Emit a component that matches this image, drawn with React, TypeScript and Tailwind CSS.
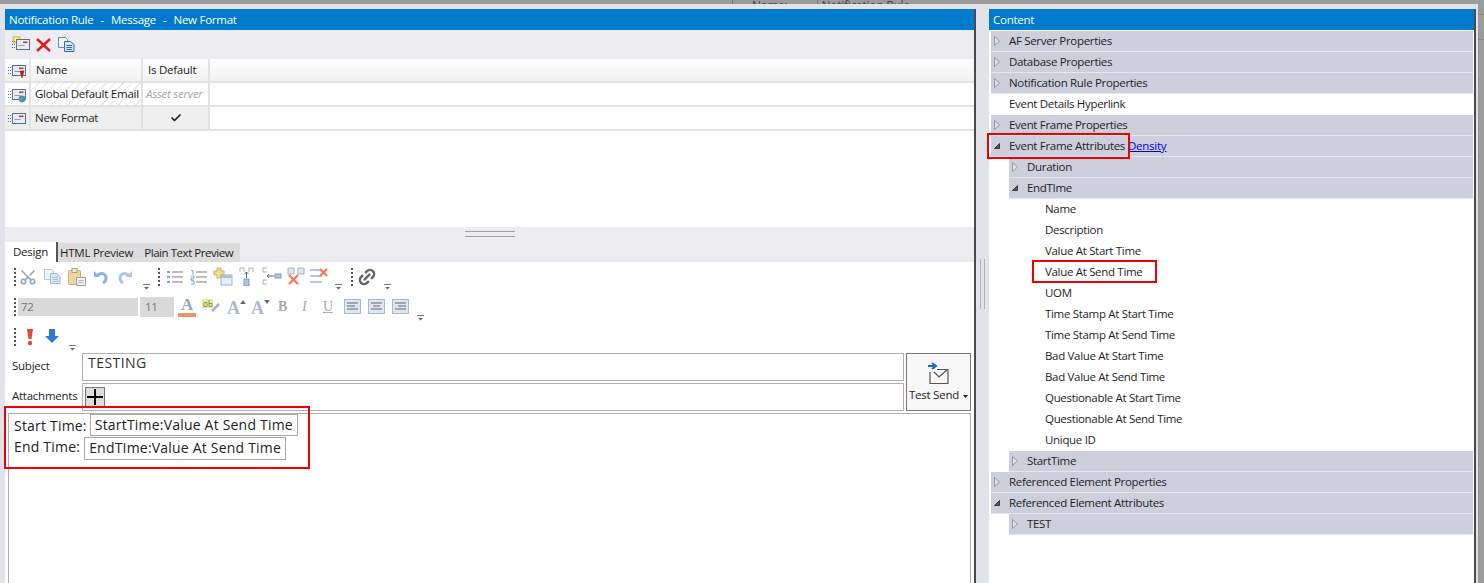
import React from "react";
import { Check, Scissors, Link2 } from "lucide-react";

const FONT = "font-['Open_Sans','Liberation_Sans',sans-serif]";

// little email icon used in the grid and the toolbar
const MailIcon = ({ badge }: { badge?: "pin" | "globe" | "star" }) => (
  <svg width="18" height="17" viewBox="0 0 18 17" className="block">
    {badge === "star" ? (
      <g>
        <rect x="1" y="0" width="7" height="7" fill="#e9d96a" stroke="#c9b64a" strokeWidth="0.6" />
        <rect x="3" y="2" width="3" height="3" fill="#fff6b0" />
      </g>
    ) : null}
    <path d="M0 5.500h3M0 8.500h3M0 11.500h3" stroke="#4f6f96" strokeWidth="1" strokeDasharray="1 1" />
    <rect x="4.500" y="3.500" width="13" height="10" fill="#e6eef8" stroke="#5f6f86" />
    <rect x="11" y="5.500" width="4.500" height="1.600" fill="#c8402e" />
    <path d="M6.500 9.500h6" stroke="#8b9bb0" strokeWidth="1" />
    {badge === "pin" ? <path d="M12 9h4l-2 7z" fill="#d8101c" stroke="#8a0a12" strokeWidth="0.5" /> : null}
    {badge === "globe" ? (
      <g>
        <circle cx="14" cy="13" r="3.400" fill="#4e93c8" />
        <path d="M12 12.500l2-1.500 1 1.500-1.500 2.500z" fill="#6cab4e" />
      </g>
    ) : null}
  </svg>
);

const DocsIcon = ({ pale }: { pale?: boolean }) => (
  <svg width="17" height="15" viewBox="0 0 17 15" className="block shrink-0">
    <path d="M.5.500h7l2 2v8h-9z" fill={pale ? "#eef3f9" : "#f4f8fd"} stroke={pale ? "#b4c8e0" : "#5b8ac4"} />
    <path d="M6.500 4.500h6l3.500 3v7H6.500z" fill={pale ? "#dbe6f3" : "#d5e4f6"} stroke={pale ? "#9db8d8" : "#2f6fb8"} />
    <path d="M8.500 8.500h5.500M8.500 10.500h5.500M8.500 12.500h5.500" stroke={pale ? "#a9c2de" : "#2f6fb8"} />
  </svg>
);

const Grip = () => (
  <div className="w-[2px] h-[18px] shrink-0 bg-[repeating-linear-gradient(180deg,#555_0,#555_2px,transparent_2px,transparent_4px)]" />
);

const Drop = ({ className }: { className: string }) => (
  <svg width="7" height="6" viewBox="0 0 7 6" className={`shrink-0 self-end ${className}`}>
    <path d="M0 .5h7" stroke="#777" />
    <path d="M1 3h5L3.500 5.500z" fill="#666" />
  </svg>
);

const ListIcon = ({ numbered }: { numbered?: boolean }) => (
  <svg width="17" height="16" viewBox="0 0 17 16">
    {numbered ? (
      <path d="M1 1.500h2v4M1 7h3v2H1v2h3M1 12h3v3H1" fill="none" stroke="#7fa6d6" strokeWidth="1" />
    ) : (
      <path d="M1 3h3M1 8h3M1 13h3" stroke="#8fa7c8" strokeWidth="2" />
    )}
    <path d="M6 3h11M6 8h11M6 13h11" stroke="#a8a8a8" strokeWidth="1.300" />
  </svg>
);

const TableTool = ({ kind }: { kind: number }) => (
  <svg width="20" height="19" viewBox="0 0 20 19">
    {kind === 0 ? (
      <g>
        <path d="M4 1h4v3h3v4H8v3H4V8H1V4h3z" fill="#f2dc92" stroke="#d0b060" />
        <rect x="8" y="8" width="11" height="10" fill="#e6eef6" stroke="#9db4cc" />
        <rect x="8" y="8" width="11" height="3" fill="#a9c2dc" />
      </g>
    ) : null}
    {kind === 1 ? (
      <g>
        <path d="M2 5V1h4v4M11 5V1h4v4" fill="none" stroke="#b0b0b0" />
        <rect x="6" y="12" width="5" height="7" fill="#a9c6e6" stroke="#7f9fc4" />
        <path d="M8.500 11V5M6.500 7l2-2 2 2" fill="none" stroke="#666" />
      </g>
    ) : null}
    {kind === 2 ? (
      <g>
        <path d="M5 1H1v4h4M5 13H1v4h4" fill="none" stroke="#b0b0b0" />
        <rect x="13" y="7" width="6" height="4" fill="#a9c6e6" stroke="#7f9fc4" />
        <path d="M12 9H5M7 7L5 9l2 2" fill="none" stroke="#666" />
      </g>
    ) : null}
    {kind === 3 ? (
      <g>
        <path d="M2 1h6v6H2zM12 1h6v6h-6z" fill="#dfe6ee" stroke="#a8b4c2" />
        <path d="M3 8l9 9M12 8l-9 9" stroke="#f07a5c" strokeWidth="2.400" />
      </g>
    ) : null}
    {kind === 4 ? (
      <g>
        <path d="M1 3h12M1 9h12M1 15h12" stroke="#9db6d4" strokeWidth="1.500" />
        <path d="M11 2l7 7M18 2l-7 7" stroke="#f07a5c" strokeWidth="2.200" />
      </g>
    ) : null}
  </svg>
);

const AlignIcon = ({ lines }: { lines: string }) => (
  <svg width="17" height="15" viewBox="0 0 17 15">
    <rect x=".5" y=".5" width="16" height="14" fill="#dfe6f0" stroke="#a9b8cc" />
    <path d={lines} stroke="#666" strokeWidth="1.100" />
  </svg>
);

const FontSizeTool = ({ up }: { up?: boolean }) => (
  <span className="relative w-[19px] h-[20px] shrink-0 font-['Liberation_Serif',serif] text-[18px] leading-[22px] tracking-normal text-[#a9bdd4] font-bold">
    A
    <svg width="6" height="4" viewBox="0 0 7 5" className="absolute right-0 top-[3px]">
      <path d={up ? "M0 5h7L3.500 0z" : "M0 0h7L3.500 5z"} fill="#666" />
    </svg>
  </span>
);

// big bent arrow of the disabled undo and redo buttons
const UndoIcon = ({ redo, color }: { redo?: boolean; color: string }) => (
  <svg width="16" height="16" viewBox="0 0 16 16" className={redo ? "-scale-x-100 block" : "block"}>
    <path d="M1 2v6h6z" fill={color} />
    <path d="M4 7c3-4 9-3 9 2 0 2-1 4-3 5" fill="none" stroke={color} strokeWidth="3" />
  </svg>
);

const PasteIcon = () => (
  <svg width="18" height="18" viewBox="0 0 18 18" className="block shrink-0">
    <rect x=".5" y="2.500" width="12" height="14" rx="1" fill="#ecd9a2" stroke="#c6ad72" />
    <rect x="4" y="0.500" width="5" height="4" fill="#f4efe0" stroke="#a8a08c" />
    <path d="M8.500 9.500h9v8h-9z" fill="#f0f0f0" stroke="#a0a0a0" />
    <path d="M10.500 12.500h5M10.500 14.500h5" stroke="#b4b4b4" />
  </svg>
);

const Arrow = () => (
  <svg width="6" height="10" viewBox="0 0 6 10" className="block">
    <path d="M.5.500 5.500 5 .5 9.500z" fill="#dfe0e8" stroke="#9a9aa2" />
  </svg>
);

const ArrowDown = () => (
  <svg width="6" height="6" viewBox="0 0 6 6" className="block">
    <path d="M5.500.5v5H.5z" fill="#555" stroke="#222" strokeWidth="0.800" />
  </svg>
);

type Row = { label: string; level: number; mode: "closed" | "open" | "leaf"; link?: string };

const ROWS: Row[] = [
  { label: "AF Server Properties", level: 0, mode: "closed" },
  { label: "Database Properties", level: 0, mode: "closed" },
  { label: "Notification Rule Properties", level: 0, mode: "closed" },
  { label: "Event Details Hyperlink", level: 0, mode: "leaf" },
  { label: "Event Frame Properties", level: 0, mode: "closed" },
  { label: "Event Frame Attributes", level: 0, mode: "open", link: "Density" },
  { label: "Duration", level: 1, mode: "closed" },
  { label: "EndTIme", level: 1, mode: "open" },
  { label: "Name", level: 2, mode: "leaf" },
  { label: "Description", level: 2, mode: "leaf" },
  { label: "Value At Start Time", level: 2, mode: "leaf" },
  { label: "Value At Send Time", level: 2, mode: "leaf" },
  { label: "UOM", level: 2, mode: "leaf" },
  { label: "Time Stamp At Start Time", level: 2, mode: "leaf" },
  { label: "Time Stamp At Send Time", level: 2, mode: "leaf" },
  { label: "Bad Value At Start Time", level: 2, mode: "leaf" },
  { label: "Bad Value At Send Time", level: 2, mode: "leaf" },
  { label: "Questionable At Start Time", level: 2, mode: "leaf" },
  { label: "Questionable At Send Time", level: 2, mode: "leaf" },
  { label: "Unique ID", level: 2, mode: "leaf" },
  { label: "StartTime", level: 1, mode: "closed" },
  { label: "Referenced Element Properties", level: 0, mode: "closed" },
  { label: "Referenced Element Attributes", level: 0, mode: "open" },
  { label: "TEST", level: 1, mode: "closed" },
];

const TreeRow = ({ row }: { row: Row }) => {
  const indent = row.level === 0 ? "ml-0" : row.level === 1 ? "ml-[18px]" : "ml-[36px]";
  const bar = row.mode === "leaf" ? "bg-white border-white" : "bg-[#cdcfdc] border-[#e6e6ee]";
  return (
    <div className={`h-[21px] shrink-0 border-b ${bar} ${indent}`}>
      <div className="h-[20px] flex items-center text-[#1e1e1e]">
        <span className="w-[18px] pl-[3px] shrink-0 flex justify-start">
          {row.mode === "closed" ? <Arrow /> : row.mode === "open" ? <ArrowDown /> : null}
        </span>
        <span className="whitespace-nowrap tracking-[-0.32px]">{row.label}</span>
        {row.link ? <span className="ml-[3px] text-[#0000ee] underline">{row.link}</span> : null}
      </div>
    </div>
  );
};

const App = () => {
  return (
    <div className={`relative w-[1484px] h-[583px] overflow-hidden bg-[#9b9b9b] text-[11.5px] leading-[16px] tracking-[-0.25px] text-[#1e1e1e] ${FONT}`}>
      {/* Window behind, only its bottom edge shows */}
      <div className="h-[4px] overflow-hidden flex text-[#444] text-[12px]">
        <div className="ml-[732px] w-px h-[4px] bg-[#777]" />
        <span className="ml-[19px] -mt-[2px]">Name:</span>
        <div className="ml-[30px] w-px h-[4px] bg-[#777]" />
        <span className="ml-[3px] -mt-[2px]">Notification Rule</span>
      </div>
      <div className="absolute left-[1478px] top-[14px] w-[6px] h-px bg-[#888]" />
      <div className="absolute left-[1478px] top-[39px] w-[6px] h-px bg-[#888]" />

      <div className="w-[1478px] h-[579px] flex bg-[#e2e2ea] pt-[5px] pl-[5px] pr-[2px]">
        {/* Left panel */}
        <div className="w-[971px] shrink-0 flex flex-col border-r-2 border-[#4a4a4a] bg-[#ececf1]">
          <div className="h-[21px] shrink-0 bg-[#007acc] text-white pl-[4px] flex items-center gap-[7px] whitespace-nowrap">
            <span>Notification Rule</span>
            <span>-</span>
            <span>Message</span>
            <span>-</span>
            <span>New Format</span>
          </div>

          <div className="h-[29px] shrink-0 flex items-center pl-[7px]">
            <MailIcon badge="star" />
            <svg width="15" height="14" viewBox="0 0 15 14" className="ml-[6px]">
              <path d="M1 1l13 12M14 1L1 13" stroke="#e21a1a" strokeWidth="2.400" />
            </svg>
            <span className="ml-[7px]"><DocsIcon /></span>
          </div>

          {/* Grid */}
          <div className="h-[168px] shrink-0 bg-white flex flex-col">
            <div className="h-[24px] flex border-b-2 border-[#e2e2e2] bg-gradient-to-b from-white to-[#f1f1f1]">
              <div className="w-[26px] flex items-center justify-center border-r-2 border-[#e8e8e8]">
                <MailIcon badge="pin" />
              </div>
              <div className="w-[112px] pl-[5px] flex items-center border-r-2 border-[#e2e2e2]">Name</div>
              <div className="w-[67px] pl-[5px] flex items-center border-r-2 border-[#e2e2e2]">Is Default</div>
            </div>
            <div className="h-[24px] flex border-b-2 border-[#e2e2e2]">
              <div className="w-[26px] flex items-center justify-center border-r-2 border-[#e2e2e2]">
                <MailIcon badge="globe" />
              </div>
              <div className="w-[112px] pl-[4px] flex items-center whitespace-nowrap border-r-2 border-[#e2e2e2] bg-[repeating-linear-gradient(135deg,#fff_0,#fff_5px,#e6e6e6_5px,#e6e6e6_6px)]">
                Global Default Email
              </div>
              <div className="w-[67px] pl-[3px] flex items-center whitespace-nowrap italic text-[#a6a6a6] border-r-2 border-[#e2e2e2]">
                Asset server
              </div>
            </div>
            <div className="h-[24px] flex border-b-2 border-[#e2e2e2]">
              <div className="w-[26px] flex items-center justify-center border-r-2 border-[#e2e2e2] bg-[#efefef]">
                <MailIcon />
              </div>
              <div className="w-[112px] pl-[4px] flex items-center border-r-2 border-[#e2e2e2] bg-[#efefef]">New Format</div>
              <div className="w-[67px] flex items-center justify-center border-r-2 border-[#e2e2e2] bg-[#efefef]">
                <Check size={12} strokeWidth={3.5} className="text-[#222]" />
              </div>
            </div>
          </div>

          {/* Splitter */}
          <div className="h-[16px] shrink-0 flex justify-center pt-[4px]">
            <div className="w-[50px] h-[6px] border-y border-[#a0a0a0]" />
          </div>

          {/* Tabs */}
          <div className="h-[19px] shrink-0 flex items-stretch">
            <div className="w-[53px] -mt-[1px] pl-[8px] bg-white border-r-2 border-[#555] flex items-center">Design</div>
            <div className="bg-[#dcdcdc] w-[182px] flex items-center pl-[2px] gap-[11px] whitespace-nowrap">
              <span>HTML Preview</span>
              <span className="tracking-[-0.45px]">Plain Text Preview</span>
            </div>
          </div>

          {/* Editor */}
          <div className="flex-1 min-h-0 bg-white pl-[3px] pr-[3px] flex flex-col">
            <div className="h-[29px] shrink-0 flex items-center pl-[6px]">
              <Grip />
              <Scissors size={18} strokeWidth={2.2} className="ml-[3px] text-[#8fa7c8] -rotate-90" />
              <span className="ml-[7px]"><DocsIcon pale /></span>
              <span className="ml-[7px]"><PasteIcon /></span>
              <span className="ml-[7px]"><UndoIcon color="#86b4e6" /></span>
              <span className="ml-[8px]"><UndoIcon redo color="#a9c8e8" /></span>
              <Drop className="ml-[10px] mb-[1px]" />
              <div className="ml-[8px]"><Grip /></div>
              <span className="ml-[6px] flex"><ListIcon /></span>
              <span className="ml-[7px] flex"><ListIcon numbered /></span>
              <span className="ml-[6px] flex"><TableTool kind={0} /></span>
              <span className="ml-[5px] flex"><TableTool kind={1} /></span>
              <span className="ml-[4px] flex"><TableTool kind={2} /></span>
              <span className="ml-[4px] flex"><TableTool kind={3} /></span>
              <span className="ml-[3px] flex"><TableTool kind={4} /></span>
              <Drop className="ml-[6px] mb-[1px]" />
              <div className="ml-[9px]"><Grip /></div>
              <Link2 size={20} strokeWidth={3} className="ml-[4px] text-[#666] -rotate-45" />
              <Drop className="ml-[7px] mb-[1px]" />
            </div>

            <div className="h-[31px] shrink-0 flex items-center pl-[6px]">
              <Grip />
              <div className="ml-[2px] w-[120px] h-[18px] bg-[#d9d9d9] text-[#777] pl-[3px] flex items-center">72</div>
              <div className="ml-[2px] w-[34px] h-[20px] bg-[#d9d9d9] text-[#777] pl-[5px] flex items-center">11</div>
              <span className="ml-[4px] w-[18px] h-[20px] flex flex-col items-center font-['Liberation_Serif',serif] text-[17px] leading-[16px] font-bold text-[#8fa7c8]">
                A<span className="w-[18px] h-[4px] bg-[#f0916c]" />
              </span>
              <svg width="19" height="15" viewBox="0 0 19 15" className="ml-[6px] overflow-visible">
                <rect x="0" y="0" width="11" height="9" fill="#e8eaa0" />
                <path d="M2 3.500h3v4H2zM7 1v6.500h3v-3H7" fill="none" stroke="#8a9a60" />
                <path d="M10 12l7-7" stroke="#9db4cc" strokeWidth="2.500" />
              </svg>
              <span className="ml-[6px] flex"><FontSizeTool up /></span>
              <span className="ml-[5px] flex"><FontSizeTool /></span>
              <span className="ml-[8px] w-[12px] font-['Liberation_Serif',serif] font-bold text-[14px] text-[#a9a9a9]">B</span>
              <span className="ml-[12px] w-[10px] font-['Liberation_Serif',serif] italic text-[14px] text-[#a9a9a9]">I</span>
              <span className="ml-[11px] w-[12px] font-['Liberation_Serif',serif] underline text-[14px] text-[#a9a9a9]">U</span>
              <span className="ml-[9px] flex"><AlignIcon lines="M3 4h11M3 7h8M3 10h11" /></span>
              <span className="ml-[7px] flex"><AlignIcon lines="M3 4h11M5 7h7M3 10h11" /></span>
              <span className="ml-[7px] flex"><AlignIcon lines="M3 4h11M6 7h8M3 10h11" /></span>
              <Drop className="ml-[8px] mb-[1px]" />
            </div>

            <div className="h-[30px] shrink-0 flex items-center pl-[6px]">
              <Grip />
              <svg width="10" height="18" viewBox="0 0 10 18" className="ml-[9px]">
                <path d="M2 1h6L6.500 11h-3z" fill="#e0483c" />
                <circle cx="5" cy="15" r="2.200" fill="#e0483c" />
              </svg>
              <svg width="14" height="16" viewBox="0 0 14 16" className="ml-[10px]">
                <path d="M4 0h6v7h4L7 14 0 7h4z" fill="#2f7ad6" />
              </svg>
              <Drop className="ml-[10px] mb-[1px]" />
            </div>

            <div className="flex gap-[2px] pl-[4px] mt-[1px]">
              <div className="flex flex-col">
                <div className="h-[28px] flex">
                  <span className="w-[70px] pt-[5px]">Subject</span>
                  <div className="w-[822px] border border-[#b0b0b0] pl-[5px] text-[14px] leading-[18px] text-[#333] tracking-[0.45px]">TESTING</div>
                </div>
                <div className="h-[28px] mt-[2px] flex">
                  <span className="w-[70px] pt-[5px]">Attachments</span>
                  <div className="w-[822px] border border-[#b0b0b0] pl-[2px] pt-[3px]">
                    <div className="w-[20px] h-[20px] bg-[#dddddd] border border-[#777] flex items-center justify-center text-black">
                      <svg width="16" height="16" viewBox="0 0 16 16"><path d="M8 0v16M0 8h16" stroke="#000" strokeWidth="2" /></svg>
                    </div>
                  </div>
                </div>
              </div>
              <div className="w-[65px] h-[58px] border border-[#777] bg-[#f8f8f8] flex flex-col items-center pt-[8px]">
                <svg width="24" height="22" viewBox="0 0 24 22">
                  <path d="M10 7.500h11v14H3V10" fill="none" stroke="#555" strokeWidth="1.200" />
                  <path d="M7 10l5 5 8-7" fill="none" stroke="#555" strokeWidth="1.200" />
                  <path d="M1 4h6M5 1l4 3-4 3" fill="none" stroke="#1a6bb8" strokeWidth="2" />
                </svg>
                <span className="flex items-center gap-[4px] mt-[3px] whitespace-nowrap">
                  Test Send
                  <svg width="5" height="3" viewBox="0 0 5 3" className="mt-[2px]"><path d="M0 0h5L2.500 3z" fill="#222" /></svg>
                </span>
              </div>
            </div>

            {/* Design surface */}
            <div className="flex-1 mt-[2px] border-x border-t border-[#b0b0b0] pl-[5px] pt-0 text-[14px] leading-[22px] tracking-[0.2px] text-[#222]">
              <div className="flex">
                <span className="pt-px">Start Time:</span>
                <span className="ml-[3px] h-[22px] px-[4px] border border-[#a8a8a8] leading-[20px]">StartTime:Value At Send Time</span>
              </div>
              <div className="flex">
                <span className="-mt-px">End Time:</span>
                <span className="ml-[4px] h-[23px] px-[4px] border border-[#a8a8a8] leading-[20px]">EndTIme:Value At Send Time</span>
              </div>
            </div>
          </div>
        </div>

        {/* Splitter between the panels */}
        <div className="w-[13px] shrink-0 flex items-center justify-center pb-[24px]">
          <div className="w-[5px] h-[50px] border-x border-[#b4b4bc]" />
        </div>

        {/* Content panel */}
        <div className="w-[487px] shrink-0 flex flex-col border-r-2 border-[#4a4a4a] bg-white">
          <div className="h-[21px] shrink-0 bg-[#007acc] text-white pl-[4px] flex items-center">Content</div>
          <div className="pl-[2px] pr-px pt-px flex flex-col">
            {ROWS.map((row) => (
              <TreeRow key={row.label} row={row} />
            ))}
          </div>
        </div>
      </div>

      {/* Red annotation boxes */}
      <div className="absolute left-[4px] top-[406px] w-[306px] h-[63px] border-2 border-[#f00000]" />
      <div className="absolute left-[987px] top-[133px] w-[143px] h-[26px] border-2 border-[#f00000]" />
      <div className="absolute left-[1032px] top-[260px] w-[125px] h-[23px] border-2 border-[#f00000]" />
    </div>
  );
};

export default App;
